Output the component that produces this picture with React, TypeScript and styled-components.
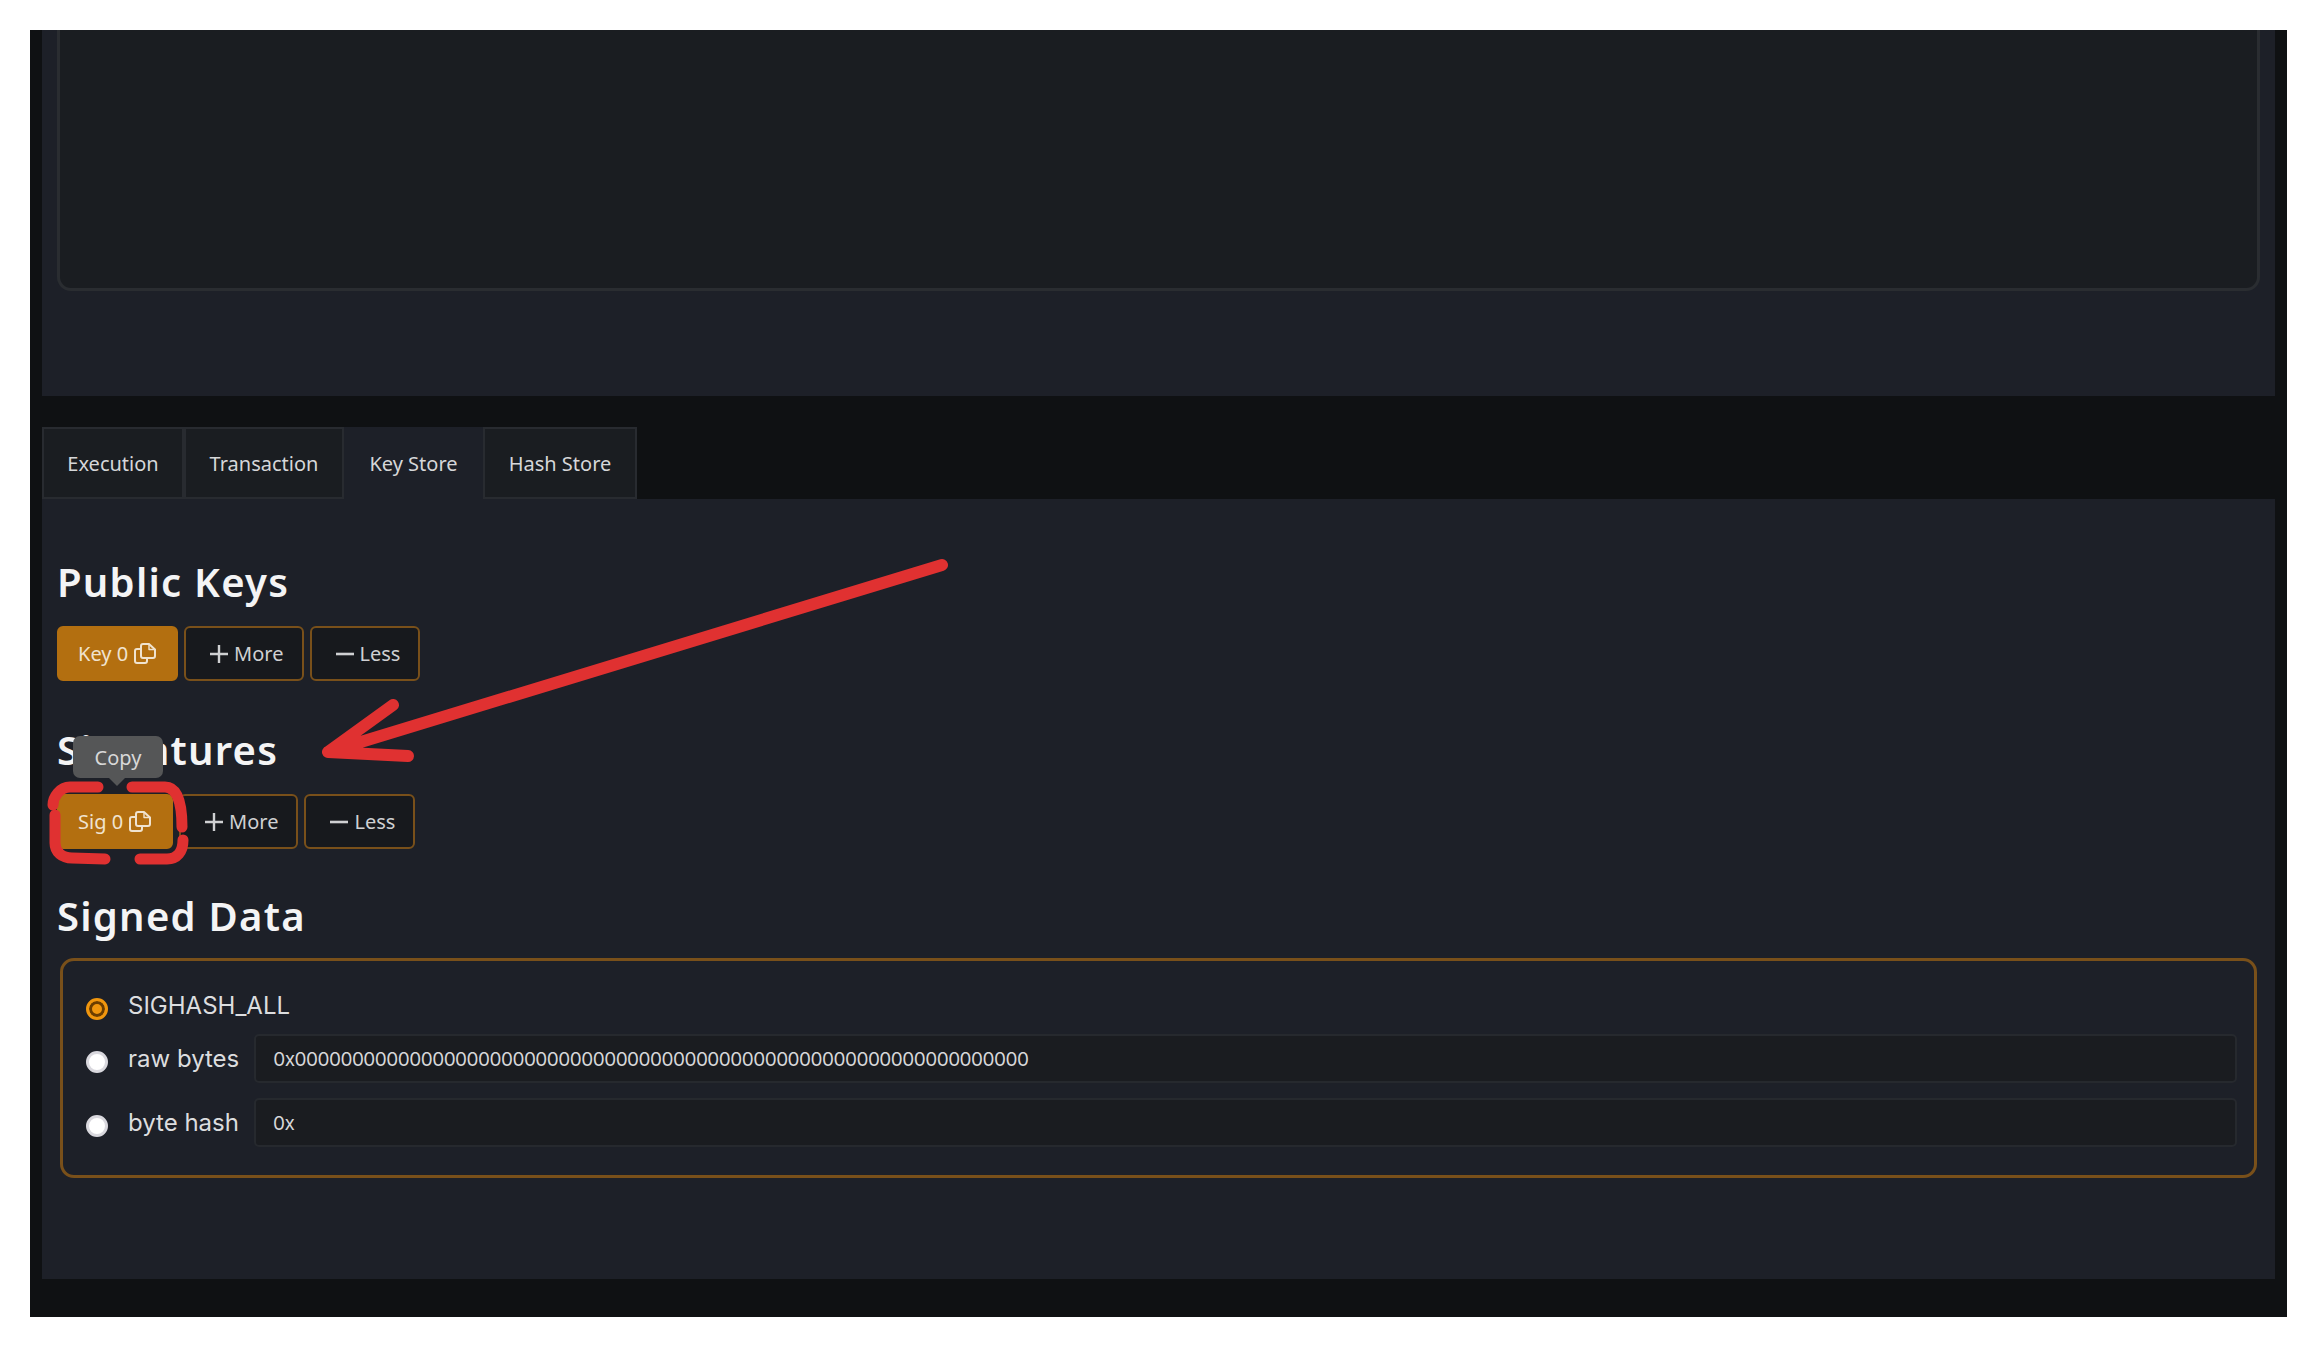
import React from 'react';
import styled, { createGlobalStyle } from 'styled-components';

const GlobalStyle = createGlobalStyle`
  html, body {
    margin: 0;
    padding: 0;
    background: #fff;
  }
  * {
    box-sizing: border-box;
  }
`;

const Page = styled.div`
  position: relative;
  width: 2317px;
  height: 1347px;
  padding: 30px;
  background: #fff;
  font-family: 'Noto Sans', sans-serif;
  overflow: hidden;
`;

const Frame = styled.div`
  display: flex;
  flex-direction: column;
  height: 1287px;
  padding: 0 12px;
  background: #0f1113;
`;

const TopPanel = styled.section`
  height: 366px;
  padding: 0 15px;
  background: #1d2028;
`;

const OutputBox = styled.div`
  height: 261px;
  background: #1a1d21;
  border: 3px solid #2a2d31;
  border-top: none;
  border-radius: 0 0 14px 14px;
`;

const TabBar = styled.nav`
  display: flex;
  margin-top: 31px;
  height: 72px;
`;

const Tab = styled.div<{ $active?: boolean; $w: number }>`
  display: flex;
  align-items: center;
  justify-content: center;
  width: ${(p) => p.$w}px;
  height: 100%;
  font-size: 20px;
  color: #d6d7d9;
  background: ${(p) => (p.$active ? '#1d2028' : '#1a1d21')};
  border: 2px solid ${(p) => (p.$active ? '#1d2028' : '#282b30')};
`;

const KeyPanel = styled.section`
  height: 780px;
  padding: 0 15px;
  background: #1d2028;
`;

const Title = styled.h2`
  margin: 0;
  height: 40px;
  font-size: 40px;
  line-height: 40px;
  font-weight: 600;
  letter-spacing: 1.25px;
  color: #f4f4f5;
`;

const ButtonRow = styled.div`
  display: flex;
  gap: 6px;
  margin-top: 24px;
`;

const Button = styled.button<{ $primary?: boolean }>`
  display: flex;
  align-items: center;
  justify-content: center;
  gap: 6px;
  height: 55px;
  padding: ${(p) => (p.$primary ? '0 20px 0 19px' : '0 18px 0 24px')};
  font: 400 20px 'Noto Sans', sans-serif;
  color: ${(p) => (p.$primary ? '#f0e3cf' : '#cfd0d2')};
  background: ${(p) => (p.$primary ? '#b36f10' : '#17191d')};
  border: 2px solid ${(p) => (p.$primary ? '#b36f10' : '#79501a')};
  border-radius: 6px;
`;

const Section = styled.div<{ $top: number }>`
  padding-top: ${(p) => p.$top}px;
`;

const TooltipAnchor = styled.div`
  position: relative;
`;

const Tooltip = styled.div`
  position: absolute;
  left: 16px;
  top: -58px;
  width: 90px;
  height: 42px;
  display: flex;
  align-items: center;
  justify-content: center;
  background: #555657;
  color: #d8d8d8;
  font-size: 20px;
  border-radius: 7px;
  &::after {
    content: '';
    position: absolute;
    left: 36px;
    bottom: -8px;
    border-left: 8px solid transparent;
    border-right: 8px solid transparent;
    border-top: 8px solid #555657;
  }
`;

const DataBox = styled.div`
  margin: 22px 3px 0;
  height: 220px;
  padding: 20px 17px 0 23px;
  display: flex;
  flex-direction: column;
  border: 3px solid #79501a;
  border-radius: 14px;
`;

const RadioRow = styled.label<{ $height: number }>`
  display: flex;
  align-items: center;
  gap: 20px;
  height: ${(p) => p.$height}px;
  flex: none;
  font-family: Inter, sans-serif;
  font-size: 24px;
  color: #dcdddf;
`;

const Radio = styled.span<{ $checked?: boolean }>`
  flex: none;
  width: 22px;
  height: 22px;
  margin-top: 7px;
  border-radius: 50%;
  background: ${(p) => (p.$checked ? '#f0960e' : '#fff')};
  border: ${(p) => (p.$checked ? '3px solid #f0960e' : '3px solid #d9d8de')};
  box-shadow: ${(p) => (p.$checked ? 'inset 0 0 0 3px #6b3d00' : 'none')};
`;

const ValueInput = styled.div`
  flex: 1;
  height: 49px;
  margin-left: -5px;
  padding: 2px 0 0 17px;
  display: flex;
  align-items: center;
  background: #1a1c20;
  border: 2px solid #26292e;
  border-radius: 5px;
  font-family: Inter, sans-serif;
  font-size: 19px;
  letter-spacing: -0.52px;
  color: #d6d7d9;
`;

const Overlay = styled.svg`
  position: absolute;
  left: 0;
  top: 0;
  pointer-events: none;
`;

const CopyIcon = () => (
  <svg width="22" height="21" viewBox="0 0 22 21" fill="none" stroke="currentColor" strokeWidth="2" strokeLinejoin="round">
    <path d="M9 1h6l6 5.5V13a2 2 0 0 1-2 2H9a2 2 0 0 1-2-2V3a2 2 0 0 1 2-2z" />
    <path d="M15 1v5.5h6" strokeWidth="1.4" />
    <path d="M7 6H3a2 2 0 0 0-2 2v10a2 2 0 0 0 2 2h8a2 2 0 0 0 2-2v-3" />
  </svg>
);

const Plus = () => (
  <svg width="18" height="18" viewBox="0 0 18 18" stroke="currentColor" strokeWidth="2.4">
    <path d="M9 0v18M0 9h18" />
  </svg>
);

const Minus = () => (
  <svg width="18" height="18" viewBox="0 0 18 18" stroke="currentColor" strokeWidth="2.6">
    <path d="M0 9h18" />
  </svg>
);

const App: React.FC = () => {
  return (
    <Page>
      <GlobalStyle />
      <Frame>
        <TopPanel>
          <OutputBox />
        </TopPanel>
        <TabBar>
          <Tab $w={142}>Execution</Tab>
          <Tab $w={160}>Transaction</Tab>
          <Tab $w={139} $active>Key Store</Tab>
          <Tab $w={154}>Hash Store</Tab>
        </TabBar>
        <KeyPanel>
          <Section $top={63}>
            <Title>Public Keys</Title>
            <ButtonRow>
              <Button $primary>Key 0 <CopyIcon /></Button>
              <Button><Plus /> More</Button>
              <Button><Minus /> Less</Button>
            </ButtonRow>
          </Section>
          <Section $top={49}>
            <Title>Signatures</Title>
            <ButtonRow>
              <TooltipAnchor>
                <Tooltip>Copy</Tooltip>
                <Button $primary>Sig 0 <CopyIcon /></Button>
              </TooltipAnchor>
              <Button><Plus /> More</Button>
              <Button><Minus /> Less</Button>
            </ButtonRow>
          </Section>
          <Section $top={47}>
            <Title>Signed Data</Title>
            <DataBox>
              <RadioRow $height={48}><Radio $checked />SIGHASH_ALL</RadioRow>
              <RadioRow $height={59}>
                <Radio />raw bytes
                <ValueInput>0x0000000000000000000000000000000000000000000000000000000000000000</ValueInput>
              </RadioRow>
              <RadioRow $height={69}>
                <Radio />byte hash
                <ValueInput>0x</ValueInput>
              </RadioRow>
            </DataBox>
          </Section>
        </KeyPanel>
      </Frame>
      <Overlay width="2317" height="1347" viewBox="0 0 2317 1347" fill="none" stroke="#e03131" strokeLinecap="round" strokeLinejoin="round">
        <path d="M942 565L328 752M393 705L328 752L408 756" strokeWidth="12" />
        <path d="M98 787H70C60 787 53 797 53 805" strokeWidth="11" />
        <path d="M55 815V843C55 852 62 858 72 858L105 859" strokeWidth="11" />
        <path d="M132 787H165C176 787 182 800 182 827" strokeWidth="11" />
        <path d="M140 859H167C177 859 183 852 183 840" strokeWidth="11" />
      </Overlay>
    </Page>
  );
};

export default App;
